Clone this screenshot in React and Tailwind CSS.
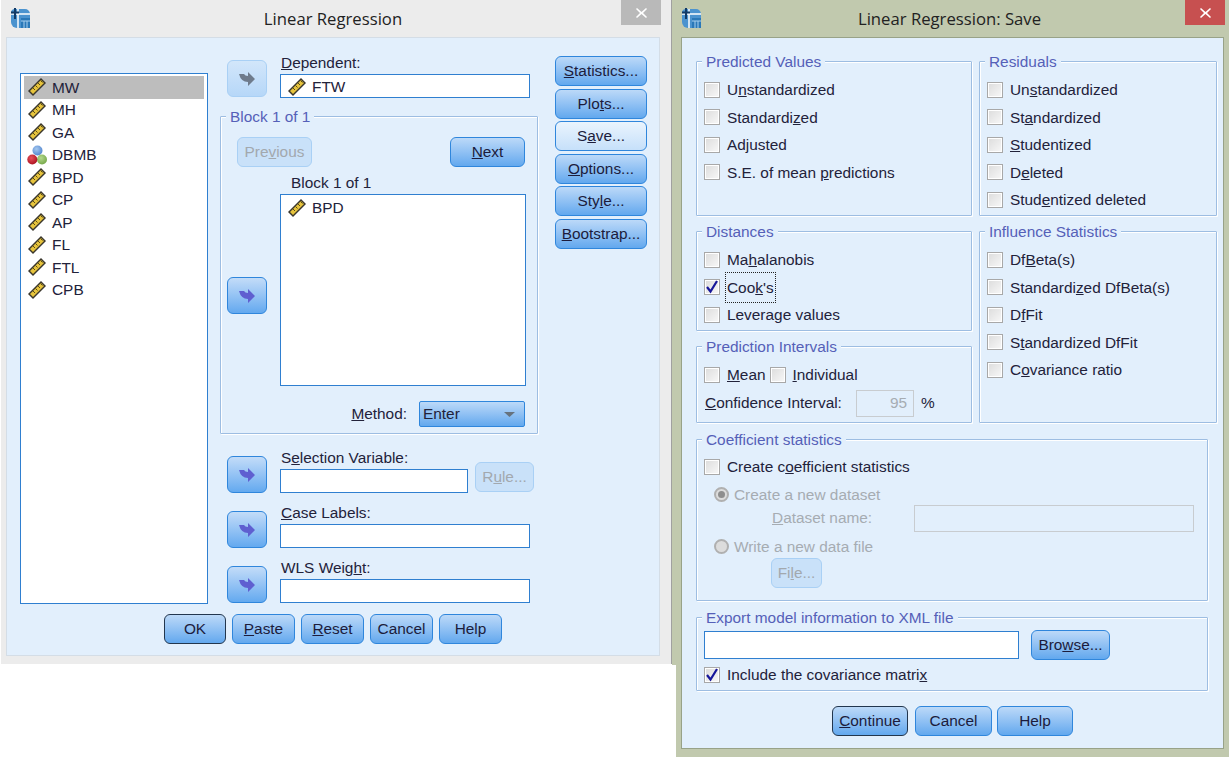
import React from "react";

const FONT = "font-['Liberation_Sans',Arial,sans-serif]";

function Ruler() {
  return (
    <svg width="20" height="20" viewBox="0 0 20 20" className="shrink-0">
      <polygon points="1,14 14,1 19,6 6,19" fill="#3a362c" />
      <polygon points="3,14 14,3 17,6 6,17" fill="#e6c33c" />
      <path d="M6 11l2 2M8.500 8.500l2 2M11 6l2 2M13.500 3.500l2 2" stroke="#5c4d14" strokeWidth="1" />
    </svg>
  );
}

function Balls() {
  return (
    <svg width="20" height="20" viewBox="0 0 20 20" className="shrink-0">
      <defs>
        <radialGradient id="ballBlue" cx="0.400" cy="0.350" r="0.700">
          <stop offset="0" stopColor="#a4c8f0" />
          <stop offset="1" stopColor="#4f83cc" />
        </radialGradient>
        <radialGradient id="ballRed" cx="0.400" cy="0.350" r="0.700">
          <stop offset="0" stopColor="#e8505a" />
          <stop offset="1" stopColor="#a8101e" />
        </radialGradient>
        <radialGradient id="ballGreen" cx="0.400" cy="0.350" r="0.700">
          <stop offset="0" stopColor="#b4d88c" />
          <stop offset="1" stopColor="#74a648" />
        </radialGradient>
      </defs>
      <circle cx="10.500" cy="5.500" r="5" fill="url(#ballBlue)" />
      <circle cx="15" cy="14.500" r="5" fill="url(#ballGreen)" />
      <circle cx="5.300" cy="14.500" r="5" fill="url(#ballRed)" />
    </svg>
  );
}

function AppIcon() {
  return (
    <svg width="21" height="21" viewBox="0 0 21 21" className="shrink-0">
      <path d="M5 1h10a5 5 0 0 1 5 5v14H7a6 6 0 0 1-6-6V5a4 4 0 0 1 4-4z" fill="#4b93cf" />
      <path d="M1 6h19M8 1v19" stroke="#fff" strokeWidth="1.500" />
      <path d="M5 0v11M1 4.500h8" stroke="#123a66" strokeWidth="2" />
      <rect x="11" y="10" width="9" height="10" fill="#2a78b8" />
      <path d="M11 13h9M14 13v7M17 13v7" stroke="#a8cfee" strokeWidth="1" />
    </svg>
  );
}

function Arrow({ disabled }) {
  return (
    <button className={`flex h-[37px] w-[40px] shrink-0 items-center justify-center rounded-[6px] border ${disabled ? "border-[#a9d0f5] bg-gradient-to-b from-[#d2e6fa] to-[#b6d7f8]" : "border-[#2f86dc] bg-gradient-to-b from-[#c3dcf8] to-[#63a9ef]"}`}>
      <svg width="18" height="16" viewBox="0 0 18 16">
        <path d="M1 3h5q1 2 4 2V1l7 7-7 7v-4Q3 11 1 3z" fill={disabled ? "#6e7b8c" : "#5f5fd0"} />
      </svg>
    </button>
  );
}

function Btn({ children, className = "", disabled, light, focus }) {
  let look = "border-[#2f86dc] bg-gradient-to-b from-[#bcd9f8] to-[#62a8ee] text-[#1c1c3c]";
  if (disabled) look = "border-[#a9d0f5] bg-[#c9e1f9] text-[#a2a8ae]";
  if (light) look = "border-[#2f86dc] bg-gradient-to-b from-[#eaf4fd] to-[#c6e0fa] text-[#1c1c3c]";
  if (focus) look = "border-[#22364e] bg-gradient-to-b from-[#bcd9f8] to-[#62a8ee] text-[#1c1c3c]";
  return (
    <button className={`flex h-[30px] shrink-0 items-center justify-center rounded-[6px] border ${look} ${className}`}>
      <span>{children}</span>
    </button>
  );
}

function Box({ className = "", children }) {
  return <div className={`border border-[#2f7fd0] bg-white ${className}`}>{children}</div>;
}

function Group({ title, className = "", children }) {
  return (
    <div className={`relative rounded-[1px] border border-[#9dbde2] shadow-[1px_1px_0_#fff,inset_1px_1px_0_#fff] ${className}`}>
      <span className="absolute left-[5px] top-[-9px] bg-[#e2effc] px-[4px] leading-[18px] text-[#5560b8]">{title}</span>
      {children}
    </div>
  );
}

function Check({ label, checked, dotted, className = "" }) {
  return (
    <div className={`flex h-[27.5px] items-center ${className}`}>
      <span className="flex h-[16px] w-[16px] shrink-0 items-center justify-center border border-[#a8a8a8] bg-gradient-to-br from-[#dcdcdc] to-[#f8f8f8] shadow-[inset_0_0_0_1px_#fff]">
        {checked && (
          <svg width="14" height="14" viewBox="0 0 14 14">
            <path d="M2 7l3.500 4.500L12 1" fill="none" stroke="#17179a" strokeWidth="2.200" />
          </svg>
        )}
      </span>
      <span className={`ml-[7px] ${dotted ? "py-[2px] outline-1 outline-offset-[1px] outline-dotted outline-[#222]" : ""}`}>{label}</span>
    </div>
  );
}

function Radio({ on, label }) {
  return (
    <div className="flex h-[20px] items-center text-[#a6acb2]">
      <span className="flex h-[15px] w-[15px] shrink-0 items-center justify-center rounded-full border-2 border-[#b0b0b0] bg-[#dcdcdc]">
        {on && <span className="h-[7px] w-[7px] rounded-full bg-[#8e8e8e]" />}
      </span>
      <span className="ml-[5px]">{label}</span>
    </div>
  );
}

function Window({ title, frame, closeBg, titlePad, outerClass, clientClass, children }) {
  return (
    <div className={`absolute flex flex-col ${frame} ${outerClass}`}>
      <div className={`relative flex h-[37px] shrink-0 items-center justify-center ${titlePad}`}>
        <div className="absolute left-[9px] top-[8px]">
          <AppIcon />
        </div>
        <span className="font-['Open_Sans',sans-serif] text-[16.700px] text-[#222]">{title}</span>
        <div className={`absolute top-0 flex h-[25px] w-[40px] items-center justify-center ${closeBg}`}>
          <svg width="11" height="10" viewBox="0 0 11 10">
            <path d="M1 0l4.500 4 4.500-4 1 1-4 4 4 4-1 1-4.500-4-4.500 4-1-1 4-4-4-4z" fill="#fff" />
          </svg>
        </div>
      </div>
      <div className={`bg-[#e2effc] ${clientClass}`}>{children}</div>
    </div>
  );
}

const variables = [
  ["MW", <Ruler />],
  ["MH", <Ruler />],
  ["GA", <Ruler />],
  ["DBMB", <Balls />],
  ["BPD", <Ruler />],
  ["CP", <Ruler />],
  ["AP", <Ruler />],
  ["FL", <Ruler />],
  ["FTL", <Ruler />],
  ["CPB", <Ruler />],
];

function FieldRow({ label, className = "", width = "w-[250px]", extra, disabled, children }) {
  return (
    <div className={`flex items-end pl-[7px] ${className}`}>
      <Arrow disabled={disabled} />
      <div className="ml-[13px] flex flex-col">
        <span className="h-[21px] pl-[1px] leading-[20px]">{label}</span>
        <Box className={`flex h-[24px] items-center gap-[5px] pl-[6px] pt-[1px] ${width}`}>{children}</Box>
      </div>
      {extra}
    </div>
  );
}

function LinearRegression() {
  return (
    <Window
      title="Linear Regression"
      frame="bg-[#ececec] border-r border-[#a0a0a0]"
      closeBg="right-[10px] bg-[#b9b9b9]"
      titlePad="pr-[6px]"
      outerClass="left-[1px] top-0 h-[664px] w-[671px] z-10"
      clientClass="ml-[5px] h-[619px] w-[654px] border border-[#d4dde6] pl-[13px] pt-[15px]"
    >
      <div className="flex">
        {/* variable list */}
        <Box className="mt-[20px] h-[531px] w-[188px] shrink-0 px-[3px] pt-[2px]">
          <div className="flex flex-col">
            {variables.map(([name, icon], i) => (
              <div key={name} className={`flex h-[22.5px] items-center gap-[5px] pl-[3px] ${i === 0 ? "bg-[#bdbdbd]" : ""}`}>
                {icon}
                <span>{name}</span>
              </div>
            ))}
          </div>
        </Box>

        {/* middle column */}
        <div className="ml-[12px] flex w-[318px] shrink-0 flex-col">
          <FieldRow disabled label={<><u>D</u>ependent:</>} className="[&>button]:mb-[1px]">
            <Ruler />
            <span>FTW</span>
          </FieldRow>
          <Group title="Block 1 of 1" className="mt-[18px] h-[318px] w-[318px]">
            <div className="flex justify-between pl-[16px] pr-[12px] pt-[20px]">
              <Btn disabled className="w-[75px]">Pre<u>v</u>ious</Btn>
              <Btn className="w-[75px]"><u>N</u>ext</Btn>
            </div>
            <div className="flex pl-[6px]">
              <div className="mt-[110px]">
                <Arrow />
              </div>
              <div className="ml-[13px] flex flex-col">
                <span className="h-[27px] pl-[11px] pt-[6px] leading-[20px]">Block 1 of 1</span>
                <Box className="flex h-[192px] w-[246px] items-start gap-[5px] pl-[6px] pt-[3px]">
                  <Ruler />
                  <span className="leading-[20px]">BPD</span>
                </Box>
              </div>
            </div>
            <div className="mt-[15px] flex items-center justify-end gap-[12px] pr-[12px]">
              <span><u>M</u>ethod:</span>
              <div className="flex h-[26px] w-[106px] items-center justify-between rounded-[2px] border border-[#2f86dc] bg-gradient-to-b from-[#bcd9f8] to-[#62a8ee] pl-[3px] pr-[9px]">
                <span>Enter</span>
                <svg width="11" height="5" viewBox="0 0 11 5">
                  <path d="M0 0h11L5.500 5z" fill="#66727e" />
                </svg>
              </div>
            </div>
          </Group>
          <FieldRow
            label={<>S<u>e</u>lection Variable:</>}
            width="w-[188px]"
            className="mt-[14px]"
            extra={
              <div className="mb-[1px] ml-[7px]">
                <Btn disabled className="w-[59px]">R<u>u</u>le...</Btn>
              </div>
            }
          />
          <FieldRow label={<><u>C</u>ase Labels:</>} className="mt-[10px]" />
          <FieldRow label={<>WLS Weig<u>h</u>t:</>} className="mt-[10px]" />
        </div>

        {/* side buttons */}
        <div className="ml-[17px] mt-[3px] flex flex-col gap-[2.500px]">
          <Btn className="w-[92px]"><u>S</u>tatistics...</Btn>
          <Btn className="w-[92px]">Plo<u>t</u>s...</Btn>
          <Btn light className="w-[92px]">S<u>a</u>ve...</Btn>
          <Btn className="w-[92px]"><u>O</u>ptions...</Btn>
          <Btn className="w-[92px]">Sty<u>l</u>e...</Btn>
          <Btn className="w-[92px]"><u>B</u>ootstrap...</Btn>
        </div>
      </div>

      <div className="ml-[144px] mt-[10px] flex gap-[6px]">
        <Btn focus className="w-[62px]">OK</Btn>
        <Btn className="w-[63px]"><u>P</u>aste</Btn>
        <Btn className="w-[63px]"><u>R</u>eset</Btn>
        <Btn className="w-[63px]">Cancel</Btn>
        <Btn className="w-[63px]">Help</Btn>
      </div>
    </Window>
  );
}

function LinearRegressionSave() {
  return (
    <Window
      title="Linear Regression: Save"
      frame="bg-[#c1c9ae]"
      closeBg="right-[4px] bg-[#c75050]"
      titlePad="pr-[2px]"
      outerClass="left-[672px] top-0 h-[757px] w-[557px]"
      clientClass="ml-[9px] h-[712px] w-[543px] border border-[#98a288] pl-[14px] pt-[23px]"
    >
      <div className="flex gap-[7px]">
        <div className="flex w-[276px] flex-col gap-[15px]">
          <Group title="Predicted Values" className="h-[155px] pl-[7px] pt-[14px]">
            <Check label={<>U<u>n</u>standardized</>} />
            <Check label={<>Standardi<u>z</u>ed</>} />
            <Check label="Adjusted" />
            <Check label={<>S.E. of mean <u>p</u>redictions</>} />
          </Group>
          <Group title="Distances" className="h-[100px] pl-[7px] pt-[14px]">
            <Check label={<>Ma<u>h</u>alanobis</>} />
            <Check checked dotted label={<>Coo<u>k</u>'s</>} />
            <Check label={<>Levera<u>g</u>e values</>} />
          </Group>
          <Group title="Prediction Intervals" className="h-[77px] pl-[7px] pt-[14px]">
            <div className="flex gap-[4px]">
              <Check label={<><u>M</u>ean</>} />
              <Check label={<><u>I</u>ndividual</>} />
            </div>
            <div className="mt-[1px] flex items-center">
              <span className="w-[152px] pl-[1px]"><u>C</u>onfidence Interval:</span>
              <div className="flex h-[27px] w-[58px] items-center justify-end border border-[#c8ccd0] pr-[6px] text-[#a6acb2]">95</div>
              <span className="ml-[7px]">%</span>
            </div>
          </Group>
        </div>
        <div className="flex w-[238px] flex-col gap-[15px]">
          <Group title="Residuals" className="h-[155px] pl-[7px] pt-[14px]">
            <Check label={<>Un<u>s</u>tandardized</>} />
            <Check label={<>St<u>a</u>ndardized</>} />
            <Check label={<><u>S</u>tudentized</>} />
            <Check label={<>D<u>e</u>leted</>} />
            <Check label={<>Stud<u>e</u>ntized deleted</>} />
          </Group>
          <Group title="Influence Statistics" className="h-[192px] pl-[7px] pt-[14px]">
            <Check label={<>Df<u>B</u>eta(s)</>} />
            <Check label={<>Standardi<u>z</u>ed DfBeta(s)</>} />
            <Check label={<>D<u>f</u>Fit</>} />
            <Check label={<>S<u>t</u>andardized DfFit</>} />
            <Check label={<>C<u>o</u>variance ratio</>} />
          </Group>
        </div>
      </div>

      <Group title="Coefficient statistics" className="mt-[16px] h-[162px] w-[512px] pl-[7px] pt-[13px]">
        <Check label={<>Create c<u>o</u>efficient statistics</>} />
        <div className="mt-[4px] pl-[10px]">
          <Radio on label="Create a new dataset" />
          <div className="flex items-center text-[#a6acb2]">
            <span className="ml-[58px] w-[142px]"><u>D</u>ataset name:</span>
            <div className="h-[27px] w-[280px] border border-[#c8ccd0]" />
          </div>
          <div className="mt-[5px]">
            <Radio label="Write a new data file" />
          </div>
          <Btn disabled className="ml-[57px] mt-[1px] w-[51px]">Fi<u>l</u>e...</Btn>
        </div>
      </Group>

      <Group title="Export model information to XML file" className="mt-[16px] h-[74px] w-[512px] pl-[7px] pt-[12px]">
        <div className="flex items-center gap-[12px]">
          <Box className="h-[28px] w-[315px]" />
          <Btn className="w-[79px]">Bro<u>w</u>se...</Btn>
        </div>
        <Check checked label={<>Include the covariance matri<u>x</u></>} className="mt-[1px]" />
      </Group>

      <div className="ml-[136px] mt-[15px] flex gap-[7px]">
        <Btn focus className="w-[76px]"><u>C</u>ontinue</Btn>
        <Btn className="w-[77px]">Cancel</Btn>
        <Btn className="ml-[-2px] w-[76px]">Help</Btn>
      </div>
    </Window>
  );
}

export default function App() {
  return (
    <div className={`relative h-[757px] w-[1229px] overflow-hidden bg-white text-[15.400px] text-[#22223a] ${FONT}`}>
      <LinearRegression />
      <LinearRegressionSave />
      {/* white notch under the first window */}
      <div className="absolute left-[672px] top-[665px] h-[92px] w-[4px] bg-white" />
    </div>
  );
}
